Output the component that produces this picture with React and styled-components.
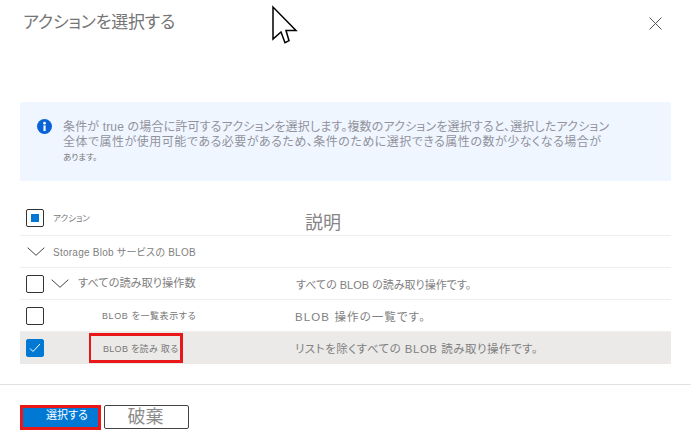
import React from "react";
import styled, { createGlobalStyle } from "styled-components";

const Global = createGlobalStyle`
  html, body { margin: 0; padding: 0; background: #fff; }
  body { font-family: "Liberation Sans", "Noto Sans CJK JP", sans-serif; color: #777; font-feature-settings: "palt"; }
  * { box-sizing: border-box; }
`;

const Page = styled.div`
  position: relative;
  width: 691px;
  height: 445px;
  overflow: hidden;
  display: flex;
  flex-direction: column;
  & > * { flex: none; }
`;
const Header = styled.header`
  height: 102px;
  padding: 11px 29px 0 23px;
  display: flex;
  justify-content: space-between;
  align-items: flex-start;
`;
const Title = styled.h1`
  margin: 0;
  font-size: 17px;
  line-height: 24px;
  font-weight: 400;
  letter-spacing: -0.2px;
  color: #757575;
`;
const CloseButton = styled.button`
  border: 0;
  background: none;
  padding: 0;
  margin-top: 6px;
  width: 13px;
  height: 13px;
  display: flex;
`;
const InfoBox = styled.section`
  margin: 0 20px;
  height: 79px;
  padding: 17px 20px 0 17px;
  background: #eff6ff;
  border-radius: 2px;
  display: flex;
  gap: 11px;
`;
const InfoIcon = styled.svg`
  flex: none;
  width: 15px;
  height: 15px;
`;
const InfoText = styled.div`
  margin: 0;
  padding-top: 1px;
  color: #92929c;
`;
const InfoLine = styled.p`
  margin: 0;
  font-size: 12px;
  line-height: 15px;
  white-space: nowrap;
  letter-spacing: ${p => p.$ls}px;
`;
const InfoSmall = styled.p`
  margin: 0;
  font-size: 8.5px;
  line-height: 14px;
  color: #777;
`;
const Table = styled.div`
  margin: 22px 20px 0;
  display: flex;
  flex-direction: column;
`;
const Row = styled.div`
  display: grid;
  grid-template-columns: 275px 1fr;
  height: 32px;
  align-items: center;
  border-bottom: ${p => (p.$selected ? "0" : "1px solid #eee")};
  background: ${p => (p.$selected ? "#ebeae8" : "transparent")};
`;
const HeadRow = styled(Row)`
  height: 33px;
  padding-bottom: 2px;
`;
const NameCell = styled.div`
  display: flex;
  align-items: center;
  padding-left: 6px;
  min-width: 0;
`;
const Box = styled.span`
  flex: none;
  width: 18px;
  height: 18px;
  border-radius: 2px;
  border: 1px solid ${p => (p.$checked ? "#0078d4" : "#333")};
  background: ${p => (p.$checked ? "#0078d4" : "#fff")};
  display: flex;
  align-items: center;
  justify-content: center;
`;
const BoxFill = styled.span`
  width: 8px;
  height: 8px;
  background: #0078d4;
`;
const HeadLabel = styled.span`
  margin-left: 9px;
  font-size: 8.5px;
  line-height: 12px;
  color: #777;
`;
const HeadDesc = styled.span`
  font-size: 18px;
  line-height: 20px;
  color: #858585;
  padding-left: 10px;
  transform: translateY(5px);
`;
const Chevron = styled.svg`
  flex: none;
  width: 18px;
  height: 9px;
  margin-left: ${p => p.$ml || 0}px;
`;
const GroupLabel = styled.span`
  margin-left: 8px;
  font-size: 10px;
  letter-spacing: 0.25px;
  white-space: nowrap;
  color: #808080;
`;
const ParentLabel = styled.span`
  margin-left: 9px;
  font-size: 11.2px;
  line-height: 14px;
  white-space: nowrap;
  color: #808080;
  transform: translateY(-1px);
`;
const ChildLabel = styled.span`
  margin-left: 58px;
  font-size: 9px;
  letter-spacing: 0.6px;
  white-space: nowrap;
  color: #777;
`;
const MarkedLabel = styled.span`
  margin-left: 45px;
  padding: 0 4px 0 12px;
  height: 30px;
  width: 94px;
  display: flex;
  align-items: center;
  border: 3px solid #e81818;
  border-left-width: 2px;
  font-size: 9px;
  letter-spacing: 0.3px;
  white-space: nowrap;
  color: #777;
`;
const Desc = styled.span`
  font-size: ${p => p.$size || 11.5}px;
  letter-spacing: ${p => p.$ls || 0}px;
  white-space: nowrap;
  color: #808080;
  padding-left: ${p => p.$pl || 0}px;
`;
const Footer = styled.footer`
  margin-top: 20px;
  border-top: 1px solid #e1e1e1;
  padding: 20px 20px 0;
  display: flex;
  align-items: flex-start;
  gap: 3px;
`;
const PrimaryButton = styled.button`
  width: 81px;
  height: 25px;
  border: 3px solid #e81818;
  background: #0078d4;
  color: #fff;
  font: inherit;
  font-size: 11px;
  line-height: 14px;
  padding: 0 0 5px 13px;
`;
const SecondaryButton = styled.button`
  width: 85px;
  height: 24px;
  border: 1px solid #444;
  border-radius: 2px;
  background: #fff;
  color: #8c8c8c;
  font: inherit;
  font-size: 18px;
  line-height: 22px;
  padding: 0 2px 0 0;
`;
const Cursor = styled.svg`
  position: absolute;
  left: 271px;
  top: 5px;
  width: 27px;
  height: 40px;
`;

const ChevronIcon = ({ ml }) => (
  <Chevron $ml={ml} viewBox="0 0 18 9">
    <path d="M.7.7 9 8.3 17.3.7" fill="none" stroke="#444" strokeWidth="1" />
  </Chevron>
);

export default function App() {
  return (
    <Page>
      <Global />
      <Header>
        <Title>アクションを選択する</Title>
        <CloseButton aria-label="閉じる">
          <svg width="13" height="13" viewBox="0 0 13 13">
            <path d="M.5.5l12 12M12.5.5l-12 12" stroke="#555" strokeWidth="1" fill="none" />
          </svg>
        </CloseButton>
      </Header>
      <InfoBox>
        <InfoIcon viewBox="0 0 16 16">
          <circle cx="8" cy="8" r="8" fill="#0a63d6" />
          <rect x="6.9" y="6.8" width="2.3" height="6" fill="#fff" />
          <circle cx="8" cy="4.4" r="1.4" fill="#fff" />
        </InfoIcon>
        <InfoText>
          <InfoLine $ls={0.16}>条件が true の場合に許可するアクションを選択します。複数のアクションを選択すると、選択したアクション</InfoLine>
          <InfoLine $ls={0.5}>全体で属性が使用可能である必要があるため、条件のために選択できる属性の数が少なくなる場合が</InfoLine>
          <InfoSmall>あります。</InfoSmall>
        </InfoText>
      </InfoBox>
      <Table>
        <HeadRow>
          <NameCell>
            <Box><BoxFill /></Box>
            <HeadLabel>アクション</HeadLabel>
          </NameCell>
          <HeadDesc>説明</HeadDesc>
        </HeadRow>
        <Row>
          <NameCell>
            <ChevronIcon ml={1} />
            <GroupLabel>Storage Blob サービスの BLOB</GroupLabel>
          </NameCell>
        </Row>
        <Row>
          <NameCell>
            <Box />
            <ChevronIcon ml={7} />
            <ParentLabel>すべての読み取り操作数</ParentLabel>
          </NameCell>
          <Desc $pl={1} $size={11}>すべての BLOB の読み取り操作です。</Desc>
        </Row>
        <Row>
          <NameCell>
            <Box />
            <ChildLabel>BLOB を一覧表示する</ChildLabel>
          </NameCell>
          <Desc $ls={1.1}>BLOB 操作の一覧です。</Desc>
        </Row>
        <Row $selected>
          <NameCell>
            <Box $checked>
              <svg width="12" height="10" viewBox="0 0 12 10">
                <path d="M1 5.5l3 3L11 1" fill="none" stroke="#fff" strokeWidth="1" />
              </svg>
            </Box>
            <MarkedLabel>BLOB を読み 取る</MarkedLabel>
          </NameCell>
          <Desc $ls={0.5}>リストを除くすべての BLOB 読み取り操作です。</Desc>
        </Row>
      </Table>
      <Footer>
        <PrimaryButton>選択する</PrimaryButton>
        <SecondaryButton>破棄</SecondaryButton>
      </Footer>
      <Cursor viewBox="0 0 27 40">
        <path d="M2 2V34L10 27L14 37.7L18 35.7L15 25.5H25Z" fill="#fff" stroke="#000" strokeWidth="1.5" strokeLinejoin="miter" />
      </Cursor>
    </Page>
  );
}
